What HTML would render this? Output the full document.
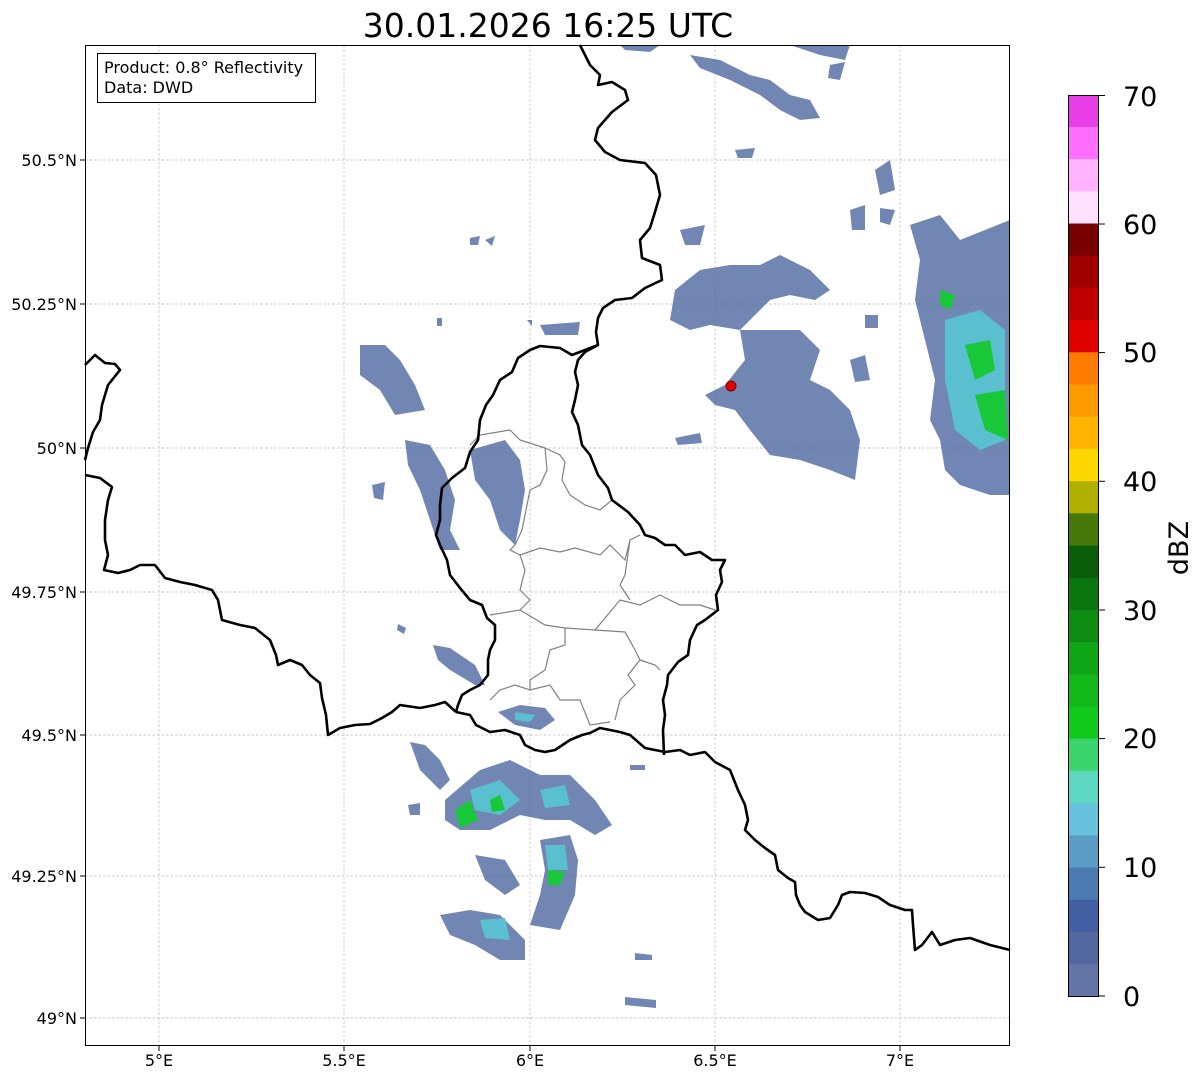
<!DOCTYPE html>
<html><head><meta charset="utf-8"><style>
html,body{margin:0;padding:0;background:#fff;}
body{width:1202px;height:1081px;overflow:hidden;position:relative;font-family:"Liberation Sans","DejaVu Sans",sans-serif;}
</style></head><body>
<svg width="1202" height="1081" xmlns="http://www.w3.org/2000/svg" style="position:absolute;left:0;top:0">
<text x="548" y="37" font-size="33" text-anchor="middle" font-family="DejaVu Sans, Liberation Sans, sans-serif">30.01.2026 16:25 UTC</text>
<g stroke="#b8b8b8" stroke-width="0.7" stroke-dasharray="2.5,2">
<line x1="159" y1="45" x2="159" y2="1046"/><line x1="344" y1="45" x2="344" y2="1046"/><line x1="530" y1="45" x2="530" y2="1046"/><line x1="715" y1="45" x2="715" y2="1046"/><line x1="900" y1="45" x2="900" y2="1046"/>
<line x1="85" y1="160" x2="1010" y2="160"/><line x1="85" y1="304" x2="1010" y2="304"/><line x1="85" y1="448" x2="1010" y2="448"/><line x1="85" y1="592" x2="1010" y2="592"/><line x1="85" y1="735" x2="1010" y2="735"/><line x1="85" y1="876" x2="1010" y2="876"/><line x1="85" y1="1018" x2="1010" y2="1018"/>
</g>
<g fill="#4f68a2" opacity="0.8">
<path d="M620 45 L660 45 L650 52 L625 50Z"/>
<path d="M790 45 L850 45 L845 60 L820 55Z"/>
<path d="M690 55 L720 60 L750 75 L770 80 L790 95 L810 100 L820 118 L800 120 L780 110 L760 95 L730 80 L700 68Z"/>
<path d="M830 65 L845 62 L840 80 L828 78Z"/>
<path d="M735 150 L755 148 L752 158 L738 158Z"/>
<path d="M875 170 L890 160 L895 190 L880 195Z"/>
<path d="M680 230 L705 225 L700 245 L685 245Z"/>
<path d="M470 238 L480 236 L478 245 L470 245Z M485 240 L495 236 L492 246Z"/>
<path d="M675 290 L700 270 L730 265 L760 265 L780 255 L810 270 L830 290 L815 300 L790 295 L770 300 L750 320 L740 330 L710 325 L690 330 L670 320Z"/>
<path d="M540 325 L580 322 L578 335 L545 335Z"/>
<path d="M360 345 L385 345 L400 360 L415 385 L425 410 L395 415 L380 390 L360 375Z"/>
<path d="M740 330 L800 330 L820 350 L810 380 L830 390 L850 410 L860 440 L855 480 L830 470 L800 460 L770 455 L750 430 L735 410 L715 405 L705 395 L725 385 L745 360Z"/>
<path d="M850 360 L865 355 L870 380 L855 382Z"/>
<path d="M675 438 L700 433 L702 443 L678 445Z"/>
<path d="M910 225 L940 215 L960 240 L985 230 L1010 220 L1010 495 L990 495 L960 485 L945 470 L940 440 L930 420 L935 380 L925 340 L915 300 L920 260Z"/>
<path d="M405 440 L430 445 L445 470 L455 500 L450 530 L460 550 L440 550 L430 520 L420 490 L408 465Z"/>
<path d="M470 450 L505 440 L520 460 L525 490 L520 520 L515 545 L500 530 L490 500 L475 480Z"/>
<path d="M372 485 L385 482 L383 500 L374 498Z"/>
<path d="M433 645 L450 648 L475 665 L485 685 L475 685 L450 670 L438 660Z"/>
<path d="M498 712 L520 705 L545 708 L555 720 L540 730 L515 725Z"/>
<path d="M398 624 L406 628 L404 634 L397 630Z"/>
<path d="M410 742 L425 745 L440 760 L450 780 L440 790 L420 770Z"/>
<path d="M445 800 L480 770 L510 760 L540 775 L570 775 L595 800 L612 825 L595 835 L570 820 L545 820 L520 815 L490 830 L460 830 L445 820Z"/>
<path d="M540 840 L570 835 L578 860 L575 895 L560 930 L530 925 L540 895 L545 870Z"/>
<path d="M475 855 L505 860 L520 885 L505 895 L485 880Z"/>
<path d="M440 915 L470 910 L500 915 L525 940 L525 960 L500 960 L475 945 L450 935Z"/>
<path d="M408 805 L420 803 L420 815 L410 815Z"/>
<path d="M635 953 L652 955 L652 960 L635 960Z M625 997 L656 1000 L656 1008 L625 1005Z M630 765 L645 765 L645 770 L630 770Z"/>
<path d="M437 318 L442 318 L442 326 L437 326Z M527 320 L532 320 L532 326Z M865 315 L878 315 L878 328 L865 328Z M850 210 L865 205 L865 230 L852 230Z M880 208 L895 210 L890 225 L880 222Z"/>
</g>
<g fill="#5ac0cf">
<path d="M470 790 L500 780 L520 800 L500 815 L475 810Z"/><path d="M540 790 L565 785 L570 805 L545 808Z"/>
<path d="M545 845 L565 845 L568 870 L548 870Z"/><path d="M480 920 L505 918 L510 940 L485 938Z"/>
<path d="M945 320 L980 310 L1005 330 L1005 440 L980 450 L955 430 L945 380Z"/>
<path d="M515 712 L535 715 L530 722 L515 720Z"/>
</g>
<g fill="#18c838">
<path d="M455 810 L470 800 L478 820 L460 828Z"/><path d="M490 800 L500 795 L505 810 L492 812Z"/>
<path d="M548 870 L565 872 L560 885 L548 885Z"/>
<path d="M965 345 L990 340 L995 370 L975 380Z"/><path d="M975 395 L1005 390 L1008 440 L985 430Z"/><path d="M940 290 L955 295 L950 310 L940 305Z"/>
</g>
<g fill="none" stroke="#808080" stroke-width="1.2">
<path d="M498 432 L510 430 L520 440 L545 448 L547 470 L540 485 L530 490 L522 530 L515 545 L510 550 L520 555"/>
<path d="M545 448 L560 455 L565 462 L562 480 L570 495 L585 505 L600 510 L612 500 L625 510"/>
<path d="M470 445 L480 435 L498 432"/>
<path d="M520 555 L540 548 L560 552 L575 548 L600 555 L610 545 L625 560 L630 540 L640 535"/>
<path d="M630 540 L625 575 L620 585 L630 600"/>
<path d="M520 555 L525 570 L520 590 L530 600 L520 610 L490 615"/>
<path d="M520 610 L545 625 L565 628 L595 630 L620 600 L640 605 L650 600 L660 595 L680 605 L700 605 L715 610"/>
<path d="M595 630 L625 632 L635 650 L640 660"/>
<path d="M565 628 L565 645 L550 650 L545 670 L530 680 L530 690"/>
<path d="M490 700 L500 690 L515 685 L530 690 L550 685 L560 700 L580 700 L590 725 L610 722"/>
<path d="M640 660 L655 665 L660 670 M640 660 L628 675 L635 685 L620 700 L615 720"/>
</g>
<g fill="none" stroke="#000" stroke-width="2.6" stroke-linejoin="round">
<path d="M580 45 L590 65 L600 75 L598 85 L612 82 L625 90 L628 100 L612 112 L598 128 L595 140 L605 152 L620 160 L645 163 L656 175 L660 195 L655 212 L650 228 L640 240 L642 258 L660 265 L662 280 L645 288 L632 298 L615 300 L603 308 L598 318 L596 332 L598 345 L585 352 L578 360 L575 372 L578 385 L575 400 L572 412 L578 425 L582 445 L590 455 L598 475 L608 488 L612 500 L628 512 L640 525 L645 535 L655 538 L665 545 L675 545 L685 555 L700 552 L712 560 L725 560 L720 570 L722 582 L716 595 L718 610 L705 620 L697 625 L690 640 L688 655 L678 662 L668 675 L667 685 L663 700 L665 715 L663 730 L664 755"/>
<path d="M598 345 L585 350 L572 355 L560 348 L540 346 L530 350 L518 358 L512 372 L500 380 L493 395 L486 405 L480 420 L478 440 L470 452 L465 468 L452 478 L442 488 L440 505 L440 520 L436 535 L440 545 L447 560 L450 575 L460 588 L470 600 L482 605 L487 618 L495 625 L495 640 L490 650 L488 660 L488 675 L480 685 L470 690 L462 695 L458 705 L456 712"/>
<path d="M456 712 L470 715 L476 725 L490 732 L505 730 L520 735 L525 745 L535 750 L545 752 L555 750 L570 740 L582 735 L590 733 L600 728 L620 732 L630 735 L645 748 L655 750 L665 752 L680 750 L690 755 L705 752 L715 762 L730 770 L738 790 L745 805 L748 820 L745 830 L755 840 L765 848 L775 855 L778 870 L788 878 L795 882 L796 895 L800 905 L805 912 L818 920 L830 918 L838 905 L842 895 L850 892 L865 893 L878 897 L890 905 L905 910 L912 910 L913 925 L915 950 L922 945 L932 932 L940 945 L955 940 L970 938 L990 945 L1010 950"/>
<path d="M85 475 L100 478 L112 487 L108 500 L105 520 L105 540 L108 555 L104 570 L118 573 L130 570 L140 565 L155 565 L165 578 L180 582 L195 585 L212 590 L218 600 L222 620 L240 625 L255 628 L270 640 L276 655 L278 665 L290 660 L302 665 L310 675 L320 683 L322 698 L326 715 L328 735 L340 728 L355 725 L370 724 L382 718 L392 712 L400 705 L420 708 L435 705 L445 702 L456 712"/>
<path d="M85 365 L95 355 L105 363 L115 364 L120 370 L108 385 L102 405 L100 420 L93 432 L88 448 L85 460"/>
</g>
<circle cx="731" cy="386" r="5" fill="#e00000" stroke="#800" stroke-width="1"/>
<rect x="85.5" y="45.5" width="924" height="1000" fill="none" stroke="#000" stroke-width="1"/>
<rect x="97.5" y="53.5" width="218" height="49" fill="#fff" stroke="#000" stroke-width="1"/>
<text x="104" y="73" font-size="16" font-family="DejaVu Sans, Liberation Sans, sans-serif">Product: 0.8° Reflectivity</text>
<text x="104" y="93" font-size="16" font-family="DejaVu Sans, Liberation Sans, sans-serif">Data: DWD</text>
<g font-size="16" font-family="DejaVu Sans, Liberation Sans, sans-serif" text-anchor="end">
<text x="77" y="166">50.5°N</text><text x="77" y="310">50.25°N</text><text x="77" y="454">50°N</text><text x="77" y="598">49.75°N</text><text x="77" y="741">49.5°N</text><text x="77" y="882">49.25°N</text><text x="77" y="1024">49°N</text>
</g>
<g font-size="16" font-family="DejaVu Sans, Liberation Sans, sans-serif" text-anchor="middle">
<text x="159" y="1066">5°E</text><text x="344" y="1066">5.5°E</text><text x="530" y="1066">6°E</text><text x="715" y="1066">6.5°E</text><text x="900" y="1066">7°E</text>
</g>
<g stroke="#000" stroke-width="1">
<line x1="80" y1="160" x2="85" y2="160"/><line x1="80" y1="304" x2="85" y2="304"/><line x1="80" y1="448" x2="85" y2="448"/><line x1="80" y1="592" x2="85" y2="592"/><line x1="80" y1="735" x2="85" y2="735"/><line x1="80" y1="876" x2="85" y2="876"/><line x1="80" y1="1018" x2="85" y2="1018"/>
<line x1="159" y1="1046" x2="159" y2="1051"/><line x1="344" y1="1046" x2="344" y2="1051"/><line x1="530" y1="1046" x2="530" y2="1051"/><line x1="715" y1="1046" x2="715" y2="1051"/><line x1="900" y1="1046" x2="900" y2="1051"/>
</g>
<g>
<rect x="1068" y="963.8" width="31" height="32.5" fill="#6374a6"/>
<rect x="1068" y="931.6" width="31" height="32.5" fill="#5468a0"/>
<rect x="1068" y="899.4" width="31" height="32.5" fill="#4460a4"/>
<rect x="1068" y="867.2" width="31" height="32.5" fill="#4a7ab0"/>
<rect x="1068" y="835" width="31" height="32.5" fill="#5b9dc6"/>
<rect x="1068" y="802.8" width="31" height="32.5" fill="#66c2dd"/>
<rect x="1068" y="770.6" width="31" height="32.5" fill="#5fd8c3"/>
<rect x="1068" y="738.4" width="31" height="32.5" fill="#3cd46e"/>
<rect x="1068" y="706.2" width="31" height="32.5" fill="#12c81a"/>
<rect x="1068" y="674" width="31" height="32.5" fill="#12b81a"/>
<rect x="1068" y="641.8" width="31" height="32.5" fill="#10a516"/>
<rect x="1068" y="609.6" width="31" height="32.5" fill="#0e8c12"/>
<rect x="1068" y="577.4" width="31" height="32.5" fill="#0b7610"/>
<rect x="1068" y="545.2" width="31" height="32.5" fill="#0a5e0a"/>
<rect x="1068" y="513" width="31" height="32.5" fill="#46790a"/>
<rect x="1068" y="480.8" width="31" height="32.5" fill="#b0b000"/>
<rect x="1068" y="448.6" width="31" height="32.5" fill="#ffd700"/>
<rect x="1068" y="416.4" width="31" height="32.5" fill="#ffb400"/>
<rect x="1068" y="384.2" width="31" height="32.5" fill="#ff9b00"/>
<rect x="1068" y="352" width="31" height="32.5" fill="#ff7c00"/>
<rect x="1068" y="319.8" width="31" height="32.5" fill="#e00000"/>
<rect x="1068" y="287.6" width="31" height="32.5" fill="#c00000"/>
<rect x="1068" y="255.4" width="31" height="32.5" fill="#a00000"/>
<rect x="1068" y="223.2" width="31" height="32.5" fill="#780000"/>
<rect x="1068" y="191" width="31" height="32.5" fill="#ffe0ff"/>
<rect x="1068" y="158.8" width="31" height="32.5" fill="#ffb2ff"/>
<rect x="1068" y="126.6" width="31" height="32.5" fill="#ff6eff"/>
<rect x="1068" y="95" width="31" height="32" fill="#e83ee8"/>
<rect x="1068.5" y="95.5" width="30" height="901" fill="none" stroke="#000" stroke-width="1"/>
</g>
<g stroke="#000" stroke-width="1">
<line x1="1099" y1="996" x2="1105" y2="996"/><line x1="1099" y1="867.3" x2="1105" y2="867.3"/><line x1="1099" y1="738.6" x2="1105" y2="738.6"/><line x1="1099" y1="610" x2="1105" y2="610"/><line x1="1099" y1="481.3" x2="1105" y2="481.3"/><line x1="1099" y1="352.6" x2="1105" y2="352.6"/><line x1="1099" y1="224" x2="1105" y2="224"/><line x1="1099" y1="95.5" x2="1105" y2="95.5"/>
</g>
<g font-size="27" font-family="DejaVu Sans, Liberation Sans, sans-serif">
<text x="1123" y="1006">0</text><text x="1123" y="877">10</text><text x="1123" y="748">20</text><text x="1123" y="620">30</text><text x="1123" y="491">40</text><text x="1123" y="362">50</text><text x="1123" y="234">60</text><text x="1123" y="106">70</text>
</g>
<text transform="translate(1188,548) rotate(-90)" font-size="27" text-anchor="middle" font-family="DejaVu Sans, Liberation Sans, sans-serif">dBZ</text>
</svg>
</body></html>
